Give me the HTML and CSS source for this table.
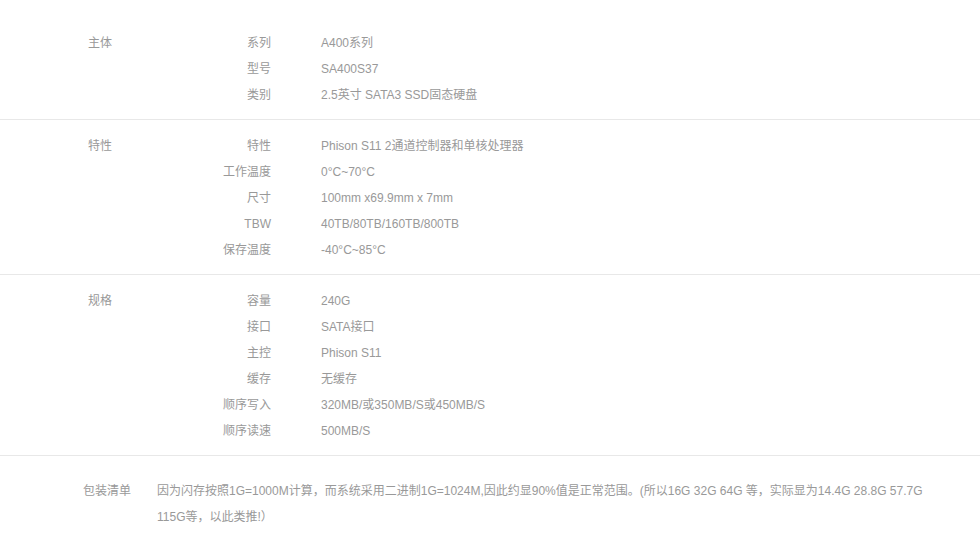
FILE: index.html
```html
<!DOCTYPE html>
<html>

<head>
  <meta charset="utf-8">
  <title>规格参数</title>
  <link rel="stylesheet" href="styles.css">
</head>

<body>
  <div class="spec">
    <div class="group">
      <div class="group-name">主体</div>
      <dl class="rows">
        <div class="row"><dt>系列</dt><dd>A400系列</dd></div>
        <div class="row"><dt>型号</dt><dd>SA400S37</dd></div>
        <div class="row"><dt>类别</dt><dd>2.5英寸 SATA3 SSD固态硬盘</dd></div>
      </dl>
    </div>
    <div class="group">
      <div class="group-name">特性</div>
      <dl class="rows">
        <div class="row"><dt>特性</dt><dd>Phison S11 2通道控制器和单核处理器</dd></div>
        <div class="row"><dt>工作温度</dt><dd>0°C~70°C</dd></div>
        <div class="row"><dt>尺寸</dt><dd>100mm x69.9mm x 7mm</dd></div>
        <div class="row"><dt>TBW</dt><dd>40TB/80TB/160TB/800TB</dd></div>
        <div class="row"><dt>保存温度</dt><dd>-40°C~85°C</dd></div>
      </dl>
    </div>
    <div class="group">
      <div class="group-name">规格</div>
      <dl class="rows">
        <div class="row"><dt>容量</dt><dd>240G</dd></div>
        <div class="row"><dt>接口</dt><dd>SATA接口</dd></div>
        <div class="row"><dt>主控</dt><dd>Phison S11</dd></div>
        <div class="row"><dt>缓存</dt><dd>无缓存</dd></div>
        <div class="row"><dt>顺序写入</dt><dd>320MB/或350MB/S或450MB/S</dd></div>
        <div class="row"><dt>顺序读速</dt><dd>500MB/S</dd></div>
      </dl>
    </div>
    <div class="package">
      <div class="package-name">包装清单</div>
      <p class="package-text">因为闪存按照1G=1000M计算，而系统采用二进制1G=1024M,因此约显90%值是正常范围。(所以16G 32G 64G 等，实际显为14.4G 28.8G 57.7G 115G等，以此类推!）</p>
    </div>
  </div>
</body>

</html>
```

FILE: styles.css
```css
* {
  margin: 0;
  padding: 0;
  box-sizing: border-box;
}

body {
  background: #fff;
  color: #999;
  font-family: Tahoma, "Liberation Sans", "Noto Sans CJK SC", sans-serif;
  font-size: 12px;
  line-height: 26px;
}

.spec {
  padding-top: 17px;
}

/* 参数分组 */
.group {
  display: flex;
  padding: 13px 0 11px;
  border-bottom: 1px solid #e8e8e8;
}

.group-name {
  width: 88px;
  padding-left: 88px;
  box-sizing: content-box;
}

.rows {
  width: 95px;
  flex: 1;
}

.row {
  display: flex;
}

.row dt {
  width: 95px;
  text-align: right;
}

.row dd {
  margin-left: 50px;
}

/* 包装清单 */
.package {
  display: flex;
  padding: 22px 0 10px;
}

.package-name {
  padding-left: 83px;
  width: 157px;
  flex-shrink: 0;
}

.package-text {
  width: 770px;
}
```
